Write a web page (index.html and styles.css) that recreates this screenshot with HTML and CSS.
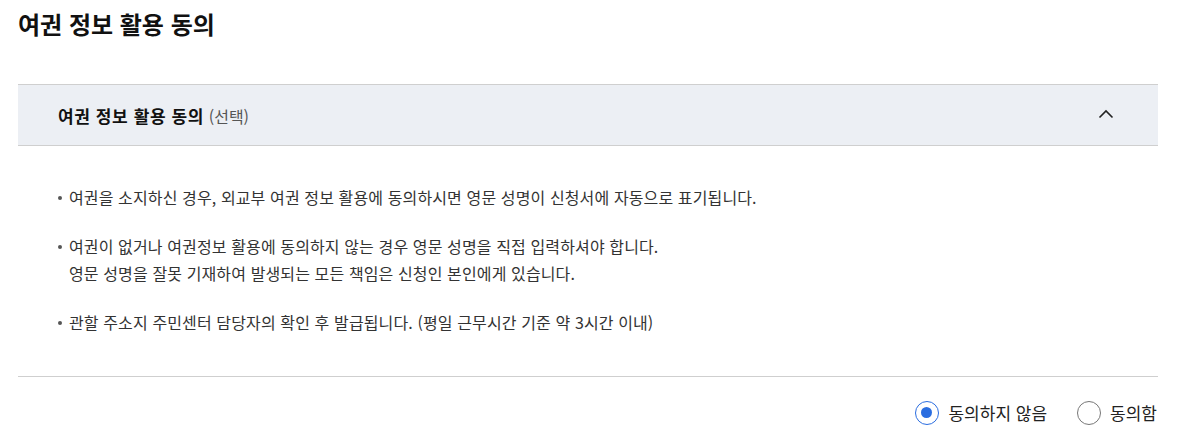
FILE: index.html
```html
<!DOCTYPE html>
<html lang="ko">
<head>
	<meta charset="utf-8"/>
	<title>여권 정보 활용 동의</title>
	<link rel="stylesheet" href="styles.css">
</head>
<body>
<div class="wrap">
	<h2 class="title">여권 정보 활용 동의</h2>

	<div class="panel">
		<div class="panel-head">
			<span class="head-text"><b>여권 정보 활용 동의</b> <span class="opt">(선택)</span></span>
			<svg class="chev" width="16" height="10" viewBox="0 0 16 10">
				<path d="M1.5 8.5 L8 2 L14.5 8.5" fill="none" stroke="#222" stroke-width="1.6"/>
			</svg>
		</div>
		<div class="panel-body">
			<ul class="notes">
				<li>여권을 소지하신 경우, 외교부 여권 정보 활용에 동의하시면 영문 성명이 신청서에 자동으로 표기됩니다.</li>
				<li>여권이 없거나 여권정보 활용에 동의하지 않는 경우 영문 성명을 직접 입력하셔야 합니다.<br>영문 성명을 잘못 기재하여 발생되는 모든 책임은 신청인 본인에게 있습니다.</li>
				<li>관할 주소지 주민센터 담당자의 확인 후 발급됩니다. (평일 근무시간 기준 약 3시간 이내)</li>
			</ul>
		</div>
	</div>

	<div class="choices">
		<label class="radio"><input type="radio" name="agree" checked><span class="dot"></span>동의하지 않음</label>
		<label class="radio"><input type="radio" name="agree"><span class="dot"></span>동의함</label>
	</div>
</div>
</body>
</html>
```

FILE: styles.css
```css
body{
	margin: 0;
	font-family: "Noto Sans CJK KR", "Noto Sans", sans-serif;
	color: #222;
	background: #fff;
}
.wrap{
	width: 1140px;
	margin-left: 18px;
}
.title{
	margin: 0;
	padding-top: 6px;
	font-size: 24px;
	font-weight: 700;
	line-height: 36px;
	color: #111;
}

.panel{
	margin-top: 42px;
	border-top: 1px solid #cfcfcf;
	border-bottom: 1px solid #cfcfcf;
}
.panel-head{
	display: flex;
	align-items: center;
	justify-content: space-between;
	height: 60px;
	padding: 0 44px 0 40px;
	background-color: #eceff4;
	border-bottom: 1px solid #cfcfcf;
}
.head-text{
	font-size: 17px;
	color: #111;
}
.head-text b{
	font-weight: 700;
	letter-spacing: 0.6px;
}
.opt{
	font-size: 16px;
	color: #555;
}
.chev{
	display: block;
	margin-top: -2px;
}

.panel-body{
	padding: 38px 40px 40px 40px;
}
.notes{
	list-style: none;
	margin: 0;
	padding: 0;
}
.notes li{
	position: relative;
	padding-left: 11px;
	font-size: 16px;
	letter-spacing: 0.12px;
	line-height: 27px;
	color: #333;
	margin-bottom: 22px;
}
.notes li:last-child{
	margin-bottom: 0;
}
.notes li::before{
	content: "";
	position: absolute;
	left: 0;
	top: 12px;
	width: 4px;
	height: 4px;
	border-radius: 50%;
	background: #555;
}

.choices{
	display: flex;
	justify-content: flex-end;
	gap: 30px;
	padding-top: 23px;
	padding-right: 1px;
}
.radio{
	display: flex;
	align-items: center;
	font-size: 17px;
	color: #222;
	cursor: pointer;
}
.radio input{
	display: none;
}
.dot{
	box-sizing: border-box;
	width: 24px;
	height: 24px;
	border-radius: 50%;
	border: 1.5px solid #777;
	margin-right: 9px;
	position: relative;
}
.radio input:checked + .dot{
	border-color: #2a6de0;
}
.radio input:checked + .dot::after{
	content: "";
	position: absolute;
	left: 5px;
	top: 5px;
	width: 11px;
	height: 11px;
	border-radius: 50%;
	background: #2a6de0;
}
```
